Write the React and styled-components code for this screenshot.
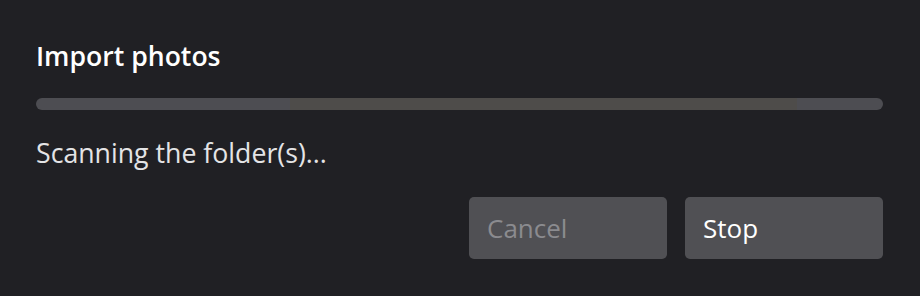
import React from "react";
import styled, { createGlobalStyle } from "styled-components";

const Global = createGlobalStyle`
  html, body { margin: 0; padding: 0; background: #202024; }
  body { font-family: "Open Sans", "Noto Sans", sans-serif; }
`;

const Dialog = styled.div`
  width: 920px;
  height: 296px;
  box-sizing: border-box;
  padding: 40px 37px 0 36px;
  background: #202024;
  display: flex;
  flex-direction: column;
`;

const Title = styled.h1`
  margin: 0;
  font-size: 26.6px;
  line-height: 32px;
  font-weight: 600;
  color: #ffffff;
`;

const Track = styled.div`
  position: relative;
  margin-top: 26px;
  height: 12px;
  border-radius: 6px;
  background: #4d4d52;
  overflow: hidden;
`;

const Indicator = styled.div`
  position: absolute;
  top: 0;
  bottom: 0;
  background: #4e4c4a;
`;

const Message = styled.p`
  margin: 27px 0 0;
  font-size: 26.7px;
  line-height: 32px;
  color: #e4e4e6;
`;

const Actions = styled.div`
  margin-top: 28px;
  display: flex;
  justify-content: flex-end;
  gap: 18px;
`;

const Button = styled.button`
  width: 198px;
  height: 62px;
  box-sizing: border-box;
  padding: 0 18px;
  border: none;
  border-radius: 5px;
  background: #505054;
  color: ${(p) => (p.disabled ? "#8b8b8f" : "#ffffff")};
  font-family: "Open Sans", "Noto Sans", sans-serif;
  font-size: 26px;
  line-height: 32px;
  text-align: left;
  display: flex;
  align-items: center;
`;

export default function App() {
  return (
    <>
      <Global />
      <Dialog>
        <Title>Import photos</Title>
        <Track>
          <Indicator style={{ left: "30%", width: "59.8%" }} />
        </Track>
        <Message>Scanning the folder(s)...</Message>
        <Actions>
          <Button disabled>Cancel</Button>
          <Button>Stop</Button>
        </Actions>
      </Dialog>
    </>
  );
}
